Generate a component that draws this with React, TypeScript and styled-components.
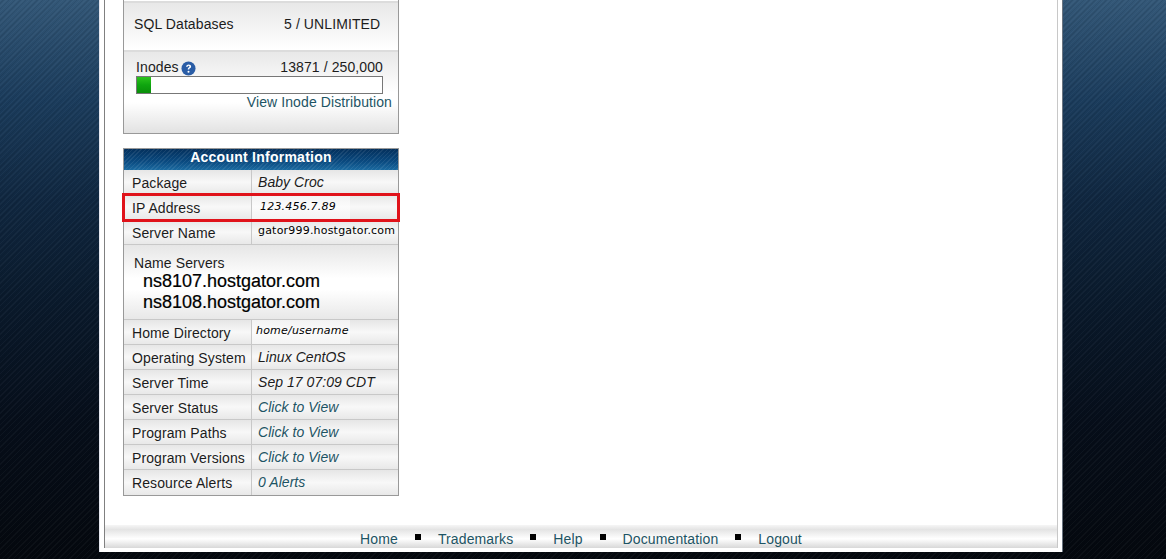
import { Fragment } from "react";
import { createGlobalStyle, styled } from "styled-components";

const Global = createGlobalStyle`
  html, body { margin: 0; padding: 0; height: 559px; overflow: hidden; }
  body {
    background-color: #04080e;
    background-image:
      repeating-linear-gradient(135deg, rgba(255,255,255,0.03) 0 1px, transparent 1px 2px, rgba(0,0,0,0.08) 2px 3px, transparent 3px 4px),
      linear-gradient(180deg, #335777 0, #1b3c5c 100px, #102740 200px, #0a1a2c 300px, #060e1a 420px, #04080e 559px);
    font-family: "Liberation Sans", Arial, sans-serif;
    color: #1c1c1c;
  }
`;

const Shell = styled.div`
  width: 964px;
  height: 552px;
  margin-left: 99px;
  box-sizing: border-box;
  background: #fff;
  border-left: 1px solid #e4e6ee;
  border-right: 1px solid #6a7480;
  padding: 0 4px 4px;
  display: flex;
  flex-direction: column;
`;

const Content = styled.div`
  flex: 1;
  border-left: 1px solid #808080;
  border-right: 1px solid #c8c8c8;
  display: flex;
  flex-direction: column;
  min-height: 0;
`;

const Sidebar = styled.div`
  padding-left: 18px;
  flex: 1;
`;

const Panel = styled.section`
  width: 276px;
  height: 134px;
  box-sizing: border-box;
  padding-top: 1px;
  border: 1px solid #999;
  border-top: 0;
  margin-bottom: 14px;
`;

const SqlRow = styled.div`
  height: 49px;
  box-sizing: border-box;
  padding: 13px 10px 0;
  border-top: 2px solid #dcdcdc;
  display: grid;
  grid-template-columns: 150px 1fr;
  background: linear-gradient(180deg, #e8e8e8 0, #fff 100%);
  font-size: 14px;
  letter-spacing: 0.1px;
`;

const InodeBlock = styled.div`
  height: 83px;
  box-sizing: border-box;
  border-top: 2px solid #dcdcdc;
  padding: 6px 6px 0 12px;
  background: linear-gradient(180deg, #e8e8e8 0, #fff 50%, #fff 62%, #e2e2e2 100%);
  font-size: 14px;
  letter-spacing: 0.1px;
`;

const InodeHead = styled.div`
  width: 247px;
  display: flex;
  justify-content: space-between;
  align-items: center;
  height: 17px;
  margin-bottom: 1px;
`;

const InodeLabel = styled.span`
  display: flex;
  align-items: center;
  gap: 2px;
`;

const HelpIcon = styled.svg`
  width: 15px;
  height: 15px;
  margin-top: 3px;
`;

const Meter = styled.div`
  width: 247px;
  height: 18px;
  box-sizing: border-box;
  border: 1px solid #777;
  background: #fff;
`;

const MeterFill = styled.div`
  height: 100%;
  background: linear-gradient(180deg, #2cc31c 0, #0fa50f 50%, #0a8f0a 100%);
`;

const InodeLink = styled.a`
  display: block;
  text-align: right;
  color: #1d5464;
`;

const InfoTable = styled.section`
  width: 276px;
  box-sizing: border-box;
  border: 1px solid #999;
`;

const InfoTitle = styled.h2`
  margin: 0;
  height: 21px;
  line-height: 16px;
  text-align: center;
  font-size: 14px;
  letter-spacing: 0.25px;
  font-weight: bold;
  color: #fff;
  background:
    repeating-linear-gradient(135deg, rgba(255,255,255,0.08) 0 1px, transparent 1px 3px),
    linear-gradient(180deg, #04305c 0, #0a4a80 60%, #1b6aa0 100%);
`;

const Row = styled.div`
  height: 25px;
  box-sizing: border-box;
  display: grid;
  grid-template-columns: 128px 1fr;
  border-bottom: 1px solid #c8c8c8;
  background: linear-gradient(180deg, #e6e6e6 0, #f8f8f8 50%, #e8e8e8 100%);
  &:last-child { border-bottom: 0; }
`;

const RowLabel = styled.div`
  font-size: 14px;
  letter-spacing: 0.1px;
  padding: 5px 0 0 8px;
  border-right: 1px solid #c8c8c8;
  white-space: nowrap;
`;

const RowValue = styled.div`
  font-size: 14px;
  letter-spacing: 0.05px;
  font-style: italic;
  padding: 4px 0 0 6px;
  white-space: nowrap;
`;

const RowLink = styled(RowValue)`
  color: #1d5464;
`;

const TinyValue = styled.div<{ $inset: number; $top: number }>`
  font-family: "DejaVu Sans", sans-serif;
  font-size: 11px;
  letter-spacing: 0.2px;
  font-style: italic;
  line-height: 13px;
  color: #000;
  padding: ${(p) => p.$top}px 0 0 ${(p) => p.$inset}px;
  white-space: nowrap;
  background: linear-gradient(90deg, rgba(255, 255, 255, 0.5) 0 98px, transparent 98px);
`;

const HostValue = styled.div`
  font-family: "DejaVu Sans", sans-serif;
  font-size: 11px;
  letter-spacing: 0.2px;
  line-height: 13px;
  color: #000;
  padding: 4px 0 0 6px;
  white-space: nowrap;
`;

const Highlight = styled.div`
  position: absolute;
  left: 122px;
  top: 193px;
  width: 278px;
  height: 29px;
  box-sizing: border-box;
  border: 3px solid #e0121a;
`;

const NameServers = styled.div`
  height: 75px;
  box-sizing: border-box;
  padding: 10px 0 0 10px;
  font-size: 14px;
  letter-spacing: 0.1px;
  border-bottom: 1px solid #c8c8c8;
  background: linear-gradient(180deg, #e6e6e6 0, #fff 45%, #fff 60%, #e8e8e8 100%);
`;

const ServerName = styled.div`
  font-size: 18px;
  line-height: 21px;
  margin-left: 9px;
  letter-spacing: 0;
  color: #000;
  -webkit-text-stroke: 0.2px #000;
`;

const Footer = styled.nav`
  height: 23px;
  box-sizing: border-box;
  background: linear-gradient(180deg, #f6f6f6 0, #e4e4e4 20%, #fff 60%, #d8d8d8 100%);
  display: flex;
  justify-content: center;
  align-items: center;
  gap: 17px;
  padding-top: 5px;
  font-size: 14px;
  letter-spacing: 0.12px;
`;

const FooterLink = styled.a`
  color: #1d5464;
`;

const Bullet = styled.span`
  width: 6px;
  height: 6px;
  background: #000;
  margin-bottom: 4px;
`;

const plainRows = [
  ["Operating System", "Linux CentOS"],
  ["Server Time", "Sep 17 07:09 CDT"],
];
const linkRows = [
  ["Server Status", "Click to View"],
  ["Program Paths", "Click to View"],
  ["Program Versions", "Click to View"],
  ["Resource Alerts", "0 Alerts"],
];
const footerLinks = ["Home", "Trademarks", "Help", "Documentation", "Logout"];

export default function App() {
  return (
    <>
      <Global />
      <Shell>
        <Content>
          <Sidebar>
            <Panel>
              <SqlRow>
                <span>SQL Databases</span>
                <span>5 / UNLIMITED</span>
              </SqlRow>
              <InodeBlock>
                <InodeHead>
                  <InodeLabel>
                    Inodes
                    <HelpIcon viewBox="0 0 16 16">
                      <circle cx="8" cy="8" r="7.5" fill="#2a5da6" />
                      <path d="M5.4 6.2c0-1.6 1.2-2.6 2.8-2.6 1.5 0 2.6.9 2.6 2.2 0 1.1-.7 1.6-1.3 2-.5.4-.7.6-.7 1.3H7.2c0-1.1.4-1.6 1-2.1.5-.4.8-.6.8-1.1 0-.5-.4-.8-.9-.8-.6 0-.9.4-1 1.1z" fill="#fff" />
                      <circle cx="8" cy="11.4" r="1.1" fill="#fff" />
                    </HelpIcon>
                  </InodeLabel>
                  <span>13871 / 250,000</span>
                </InodeHead>
                <Meter>
                  <MeterFill style={{ width: `${(14 / 245) * 100}%` }} />
                </Meter>
                <InodeLink>View Inode Distribution</InodeLink>
              </InodeBlock>
            </Panel>

            <InfoTable>
              <InfoTitle>Account Information</InfoTitle>
              <Row>
                <RowLabel>Package</RowLabel>
                <RowValue>Baby Croc</RowValue>
              </Row>
              <Row>
                <RowLabel>IP Address</RowLabel>
                <TinyValue $inset={8} $top={5}>123.456.7.89</TinyValue>
              </Row>
              <Row>
                <RowLabel>Server Name</RowLabel>
                <HostValue>gator999.hostgator.com</HostValue>
              </Row>
              <NameServers>
                Name Servers
                <ServerName>ns8107.hostgator.com</ServerName>
                <ServerName>ns8108.hostgator.com</ServerName>
              </NameServers>
              <Row>
                <RowLabel>Home Directory</RowLabel>
                <TinyValue $inset={4} $top={4}>home/username</TinyValue>
              </Row>
              {plainRows.map(([label, value]) => (
                <Row key={label}>
                  <RowLabel>{label}</RowLabel>
                  <RowValue>{value}</RowValue>
                </Row>
              ))}
              {linkRows.map(([label, value]) => (
                <Row key={label}>
                  <RowLabel>{label}</RowLabel>
                  <RowLink>{value}</RowLink>
                </Row>
              ))}
            </InfoTable>
          </Sidebar>

          <Footer>
            {footerLinks.map((link, i) => (
              <Fragment key={link}>
                {i > 0 && <Bullet />}
                <FooterLink>{link}</FooterLink>
              </Fragment>
            ))}
          </Footer>
        </Content>
      </Shell>
      <Highlight />
    </>
  );
}
